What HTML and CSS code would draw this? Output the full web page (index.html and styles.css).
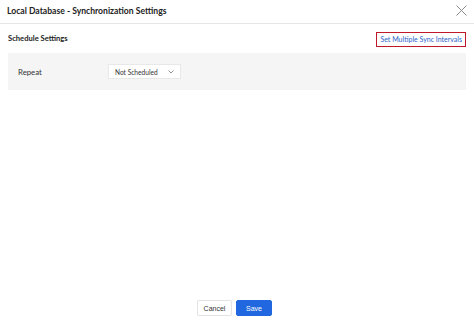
FILE: index.html
```html
<!DOCTYPE html>
<html lang="en">
<head>
    <meta charset="UTF-8">
    <meta name="viewport" content="width=device-width, initial-scale=1.0">
    <title>Local Database - Synchronization Settings</title>
    <link rel="stylesheet" href="styles.css">
</head>
<body>
    <div class="dialog">
        <header class="dialog-header">
            <h1>Local Database - Synchronization Settings</h1>
            <button class="close-button" aria-label="Close">
                <svg width="11" height="11" viewBox="0 0 11 11">
                    <path d="M0.5 0.5 L10.5 10.5 M10.5 0.5 L0.5 10.5" stroke="#8a8a8a" stroke-width="1" fill="none"/>
                </svg>
            </button>
        </header>

        <main class="dialog-body">
            <div class="section-head">
                <h2>Schedule Settings</h2>
                <a href="#" class="sync-link">Set Multiple Sync Intervals</a>
            </div>

            <div class="schedule-panel">
                <label class="field-label">Repeat</label>
                <div class="select-box">
                    <span>Not Scheduled</span>
                    <svg width="6" height="4" viewBox="0 0 6 4">
                        <path d="M0.5 0.5 L3 3 L5.5 0.5" stroke="#777" stroke-width="0.8" fill="none"/>
                    </svg>
                </div>
            </div>
        </main>

        <footer class="dialog-footer">
            <button class="btn btn-cancel">Cancel</button>
            <button class="btn btn-save">Save</button>
        </footer>
    </div>
</body>
</html>
```

FILE: styles.css
```css
html, body {
    margin: 0;
    padding: 0;
    background-color: #fff;
}

body {
    font-family: Lato, "Liberation Sans", sans-serif;
    color: #222;
}

.dialog {
    width: 474px;
    height: 323px;
    display: flex;
    flex-direction: column;
}

/* Header */
.dialog-header {
    height: 24px;
    border-bottom: 1px solid #e6e6e6;
    display: flex;
    align-items: center;
    justify-content: space-between;
    padding: 0 7px 0 7px;
    box-sizing: border-box;
}

.dialog-header h1 {
    margin: 0;
    font-size: 8.6px;
    font-weight: 700;
    color: #222;
    padding-bottom: 1px;
}

.close-button {
    border: none;
    background: none;
    padding: 0;
    display: flex;
    margin-top: -2px;
}

/* Body */
.dialog-body {
    flex: 1;
    padding: 0 8px;
}

.section-head {
    display: flex;
    justify-content: space-between;
    align-items: center;
    height: 28px;
}

.section-head h2 {
    margin: 0;
    font-size: 7.6px;
    font-weight: 700;
    color: #222;
}

.sync-link {
    font-size: 7px;
    color: #2b63c9;
    text-decoration: none;
    border: 1.5px solid #c0182b;
    padding: 2px 3px 3px 3px;
    margin-top: 2px;
}

.schedule-panel {
    background-color: #f5f5f5;
    height: 37px;
    display: flex;
    align-items: center;
    padding: 0 10px;
    margin-top: 1px;
}

.field-label {
    font-size: 7.8px;
    color: #333;
    width: 90px;
}

.select-box {
    width: 73px;
    height: 15px;
    background: #fff;
    border: 1px solid #e8e8e8;
    box-sizing: border-box;
    display: flex;
    align-items: center;
    justify-content: space-between;
    padding: 0 6px 0 6px;
    font-size: 6.6px;
    color: #333;
}

/* Footer */
.dialog-footer {
    height: 23px;
    display: flex;
    justify-content: center;
    gap: 4px;
    padding-right: 5px;
}

.btn {
    font-family: "Liberation Sans", Arial, sans-serif;
    font-size: 7px;
    height: 16px;
    border-radius: 2px;
    padding: 0;
    cursor: pointer;
}

.btn-cancel {
    width: 35px;
    background: #fff;
    border: 1px solid #e3e3e3;
    color: #333;
}

.btn-save {
    width: 36px;
    background: #2067e0;
    border: 1px solid #2067e0;
    color: #fff;
}
```
